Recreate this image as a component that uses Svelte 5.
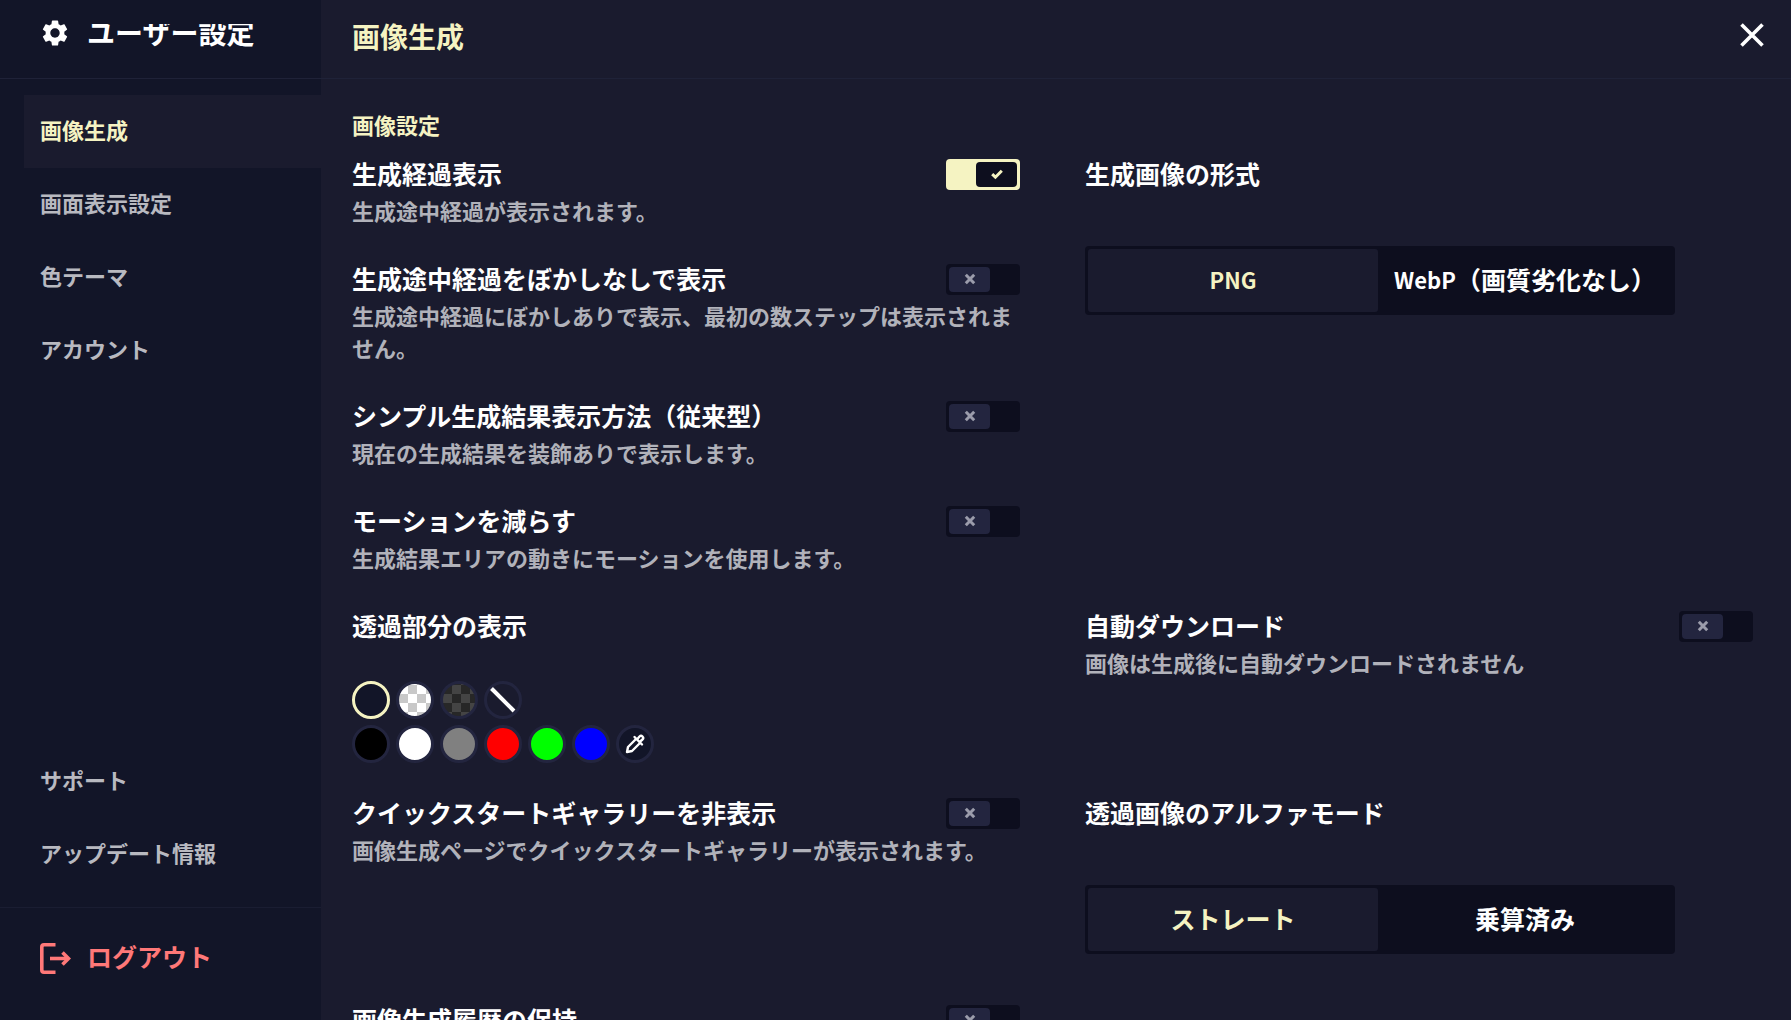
<script lang="ts">
  const mainTabs = ["画像生成", "画面表示設定", "色テーマ", "アカウント"];
  const infoTabs = ["サポート", "アップデート情報"];
  let activeTab = $state("画像生成");

  let settings = $state([
    { title: "生成経過表示", text: "生成途中経過が表示されます。", on: true },
    {
      title: "生成途中経過をぼかしなしで表示",
      text: "生成途中経過にぼかしありで表示、最初の数ステップは表示されません。",
      on: false,
    },
    {
      title: "シンプル生成結果表示方法（従来型）",
      text: "現在の生成結果を装飾ありで表示します。",
      on: false,
    },
    {
      title: "モーションを減らす",
      text: "生成結果エリアの動きにモーションを使用します。",
      on: false,
    },
  ]);
  let autoDownload = $state({
    title: "自動ダウンロード",
    text: "画像は生成後に自動ダウンロードされません",
    on: false,
  });
  let hideGallery = $state({
    title: "クイックスタートギャラリーを非表示",
    text: "画像生成ページでクイックスタートギャラリーが表示されます。",
    on: false,
  });
  let keepHistory = $state({ title: "画像生成履歴の保持", text: "", on: false });

  const formats = [
    { name: "PNG", note: "" },
    { name: "WebP", note: "（画質劣化なし）" },
  ];
  let format = $state("PNG");
  let alpha = $state("ストレート");

  const patterns = ["default", "checker-light", "checker-dark", "none"];
  const colors = ["black", "white", "gray", "red", "lime", "blue"];
  let backdrop = $state("default");
</script>

{#snippet toggleRow(item)}
  <div class="setting">
    <label class="setting-head">
      <span class="title">{item.title}</span>
      <span class="toggle" class:on={item.on}>
        <input type="checkbox" bind:checked={item.on} />
        <span class="knob">
          {#if item.on}
            <svg viewBox="0 0 12 12" width="12" height="12"><path d="M1.2 6.2 4.4 9.2 10.8 2.8" /></svg>
          {:else}
            <svg viewBox="0 0 12 12" width="12" height="12"><path d="M1.8 1.8 10.2 10.2M10.2 1.8 1.8 10.2" /></svg>
          {/if}
        </span>
      </span>
    </label>
    {#if item.text}
      <p>{item.text}</p>
    {/if}
  </div>
{/snippet}

{#snippet tab(name)}
  <button class="tab" class:active={activeTab === name} onclick={() => (activeTab = name)}>{name}</button>
{/snippet}

<div class="modal">
  <aside>
    <header class="side-head">
      <svg viewBox="2 2 20 20" width="26" height="26" fill="#fff">
        <path
          d="M19.14 12.94c.04-.3.06-.61.06-.94 0-.32-.02-.64-.07-.94l2.03-1.58c.18-.14.23-.41.12-.61l-1.92-3.32c-.12-.22-.37-.29-.59-.22l-2.39.96c-.5-.38-1.03-.7-1.62-.94l-.36-2.54c-.04-.24-.24-.41-.48-.41h-3.84c-.24 0-.43.17-.47.41l-.36 2.54c-.59.24-1.13.57-1.62.94l-2.39-.96c-.22-.08-.47 0-.59.22L2.74 8.870c-.12.21-.08.47.12.61l2.03 1.580c-.05.3-.09.63-.09.94s.02.64.07.94l-2.030 1.580c-.18.14-.23.41-.12.61l1.920 3.320c.12.22.37.29.59.22l2.390-.96c.5.38 1.030.7 1.620.94l.36 2.540c.05.24.24.41.48.41h3.840c.24 0 .44-.17.47-.41l.36-2.540c.59-.24 1.130-.56 1.620-.94l2.390.96c.22.08.47 0 .59-.22l1.920-3.320c.12-.22.07-.47-.12-.61l-2.010-1.580zM12 15.600c-1.980 0-3.600-1.620-3.600-3.600s1.620-3.600 3.600-3.600 3.600 1.620 3.600 3.600-1.620 3.600-3.600 3.600z"
        />
      </svg>
      <h1>ユーザー設定</h1>
    </header>
    <nav>
      <div>
        {#each mainTabs as name}
          {@render tab(name)}
        {/each}
      </div>
      <div>
        {#each infoTabs as name}
          {@render tab(name)}
        {/each}
      </div>
    </nav>
    <footer>
      <button class="logout">
        <svg viewBox="0 0 31 31" width="31" height="31" fill="none" stroke="currentColor" stroke-width="3.6">
          <path d="M15.5 1.8H4Q1.8 1.8 1.8 4v23q0 2.200 2.200 2.200h11.500" />
          <path d="M10 15.500h18" />
          <path d="M22.500 9.500l6 6-6 6" />
        </svg>
        <span>ログアウト</span>
      </button>
    </footer>
  </aside>

  <main>
    <header class="main-head">
      <h2>画像生成</h2>
      <button class="close" aria-label="閉じる">
        <svg viewBox="0 0 24 24" width="24" height="24" fill="none" stroke="#fff" stroke-width="3.6">
          <path d="M1.5 1.5 22.5 22.5M22.5 1.5 1.5 22.5" />
        </svg>
      </button>
    </header>

    <section>
      <h3>画像設定</h3>
      <div class="grid">
        <div class="stack">
          {#each settings as item}
            {@render toggleRow(item)}
          {/each}
        </div>
        <div class="setting">
          <span class="title">生成画像の形式</span>
          <div class="segmented">
            {#each formats as option}
              <label class:selected={format === option.name}>
                <input type="radio" name="format" value={option.name} bind:group={format} />
                <span class="latin">{option.name}</span>{option.note}
              </label>
            {/each}
          </div>
        </div>

        <div class="setting">
          <span class="title">透過部分の表示</span>
          <div class="swatches">
            <div class="swatch-row">
              {#each patterns as name}
                <button
                  class="swatch {name}"
                  class:selected={backdrop === name}
                  aria-label={name}
                  onclick={() => (backdrop = name)}
                >
                  {#if name === "none"}
                    <svg viewBox="0 0 32 32" width="32" height="32" fill="none" stroke="#fff" stroke-width="4">
                      <path d="M4.5 4.5 27 27" />
                    </svg>
                  {/if}
                </button>
              {/each}
            </div>
            <div class="swatch-row">
              {#each colors as name}
                <button
                  class="swatch"
                  class:selected={backdrop === name}
                  style="background-color: {name}"
                  aria-label={name}
                  onclick={() => (backdrop = name)}
                ></button>
              {/each}
              <button class="swatch default" aria-label="カラーピッカー">
                <svg viewBox="0 0 32 32" width="32" height="32" fill="none" stroke="#fff" stroke-width="2.4">
                  <path d="M17.500 10.500 9 19 8 24 13 23 21.500 14.500" stroke-linejoin="round" />
                  <path d="M15.500 9 23 16.500" stroke-linecap="round" />
                  <path d="M18 11.500 20.500 8.500q1.500-1.500 3 0t0 3L20.500 14" />
                </svg>
              </button>
            </div>
          </div>
        </div>
        {@render toggleRow(autoDownload)}

        {@render toggleRow(hideGallery)}
        <div class="setting">
          <span class="title">透過画像のアルファモード</span>
          <div class="segmented">
            {#each ["ストレート", "乗算済み"] as option}
              <label class:selected={alpha === option}>
                <input type="radio" name="alpha" value={option} bind:group={alpha} />
                {option}
              </label>
            {/each}
          </div>
        </div>

        {@render toggleRow(keepHistory)}
      </div>
    </section>
  </main>
</div>

<style>
  :global(body) {
    background: #1a1b2e;
  }

  .modal {
    display: grid;
    grid-template-columns: 321px minmax(0, 1fr);
    height: 100vh;
    overflow: hidden;
    background: #1a1b2e;
    color: #fff;
    font-family: "Noto Sans CJK JP", sans-serif;
    font-weight: 700;
  }

  h1, h2, h3, p {
    margin: 0;
  }

  button {
    background: none;
    border: none;
    padding: 0;
    color: inherit;
    font: inherit;
    cursor: pointer;
  }

  svg {
    display: block;
    flex: none;
  }

  aside {
    display: flex;
    flex-direction: column;
    min-height: 0;
    background: #121528;
  }

  .side-head, .main-head {
    display: flex;
    box-sizing: border-box;
    height: 79px;
    border-bottom: 1px solid #1f2238;
  }

  .side-head {
    align-items: flex-start;
    gap: 19px;
    padding: 20px 0 0 42px;
  }

  .side-head h1 {
    margin-top: 4px;
    padding-bottom: 8px;
    font-size: 28px;
    line-height: 16px;
    overflow: hidden;
  }

  nav {
    display: flex;
    flex: 1;
    flex-direction: column;
    justify-content: space-between;
    padding: 16px 0 16px 24px;
  }

  .tab {
    display: block;
    width: 100%;
    height: 73px;
    padding: 0 0 6px 16px;
    color: #b8b9c0;
    font-size: 22px;
    text-align: left;
  }

  .tab.active {
    background: #1a1b2e;
    color: #f5f3c2;
  }

  footer {
    box-sizing: border-box;
    height: 113px;
    padding: 30px 40px;
    border-top: 1px solid #1a1d32;
  }

  .logout {
    display: flex;
    align-items: center;
    gap: 16px;
    color: #ff7878;
    font-size: 25px;
    line-height: 36px;
  }

  .logout span {
    padding-bottom: 4px;
  }

  main {
    display: flex;
    flex-direction: column;
    min-height: 0;
  }

  .main-head {
    flex: none;
    align-items: flex-start;
    justify-content: space-between;
    padding: 16px 27px 0 31px;
  }

  .main-head h2 {
    color: #f5f3c2;
    font-size: 28px;
    line-height: 40px;
  }

  .close {
    padding-top: 7px;
  }

  section {
    flex: 1;
    min-height: 0;
    padding: 29px 38px 0 31px;
    overflow-y: auto;
    scrollbar-width: none;
  }

  h3 {
    margin-bottom: 15px;
    color: #f5f3c2;
    font-size: 22px;
    line-height: 33px;
  }

  .grid {
    display: grid;
    grid-template-columns: repeat(2, minmax(0, 1fr));
    gap: 32px 65px;
  }

  .stack {
    display: flex;
    flex-direction: column;
    gap: 32px;
  }

  .setting-head {
    display: flex;
    align-items: center;
    justify-content: space-between;
    cursor: pointer;
  }

  .title {
    display: block;
    padding-bottom: 2px;
    font-size: 25px;
    line-height: 34px;
  }

  .setting p {
    padding: 2px 0 3px;
    color: #b1b2ba;
    font-size: 22px;
    font-weight: 700;
    line-height: 32px;
  }

  .toggle {
    display: grid;
    flex: none;
    box-sizing: border-box;
    width: 74px;
    height: 31px;
    padding: 3px;
    border-radius: 4px;
    background: #0d0e1e;
  }

  .toggle input {
    grid-area: 1 / 1;
    margin: 0;
    appearance: none;
  }

  .knob {
    display: flex;
    grid-area: 1 / 1;
    align-items: center;
    justify-content: center;
    width: 41px;
    border-radius: 4px;
    background: #23253f;
  }

  .knob path {
    fill: none;
    stroke: #9b9cab;
    stroke-width: 3;
  }

  .toggle.on {
    background: #f5f3c2;
  }

  .on .knob {
    justify-self: end;
    background: #0d0e1e;
  }

  .on .knob path {
    stroke: #f5f3c2;
  }

  .segmented {
    display: grid;
    grid-template-columns: minmax(0, 290px) minmax(0, 1fr);
    box-sizing: border-box;
    max-width: 590px;
    height: 69px;
    margin: 54px 0 16px;
    padding: 3px;
    border-radius: 4px;
    background: #0d0e1e;
    font-size: 25px;
  }

  .segmented label {
    display: flex;
    align-items: center;
    justify-content: center;
    padding-bottom: 4px;
    border-radius: 3px;
    white-space: nowrap;
    cursor: pointer;
  }

  .segmented input {
    appearance: none;
    margin: 0;
  }

  .segmented .selected {
    background: #1a1b2e;
    color: #f5f3c2;
  }

  .latin {
    font-size: 22px;
  }

  .swatches {
    display: grid;
    gap: 6px;
    margin-top: 37px;
  }

  .swatch-row {
    display: flex;
    gap: 6px;
  }

  .swatch {
    box-sizing: border-box;
    width: 38px;
    height: 38px;
    border: 3px solid #23253f;
    border-radius: 50%;
  }

  .swatch.selected {
    border-color: #f5f3c2;
  }

  .default {
    background: #121528;
  }

  .checker-light {
    background: repeating-conic-gradient(#fff 0 25%, #c8c8c8 0 50%) 0 10px / 18px 18px;
  }

  .checker-dark {
    background: repeating-conic-gradient(#272727 0 25%, #444 0 50%) 0 10px / 18px 18px;
  }
</style>
